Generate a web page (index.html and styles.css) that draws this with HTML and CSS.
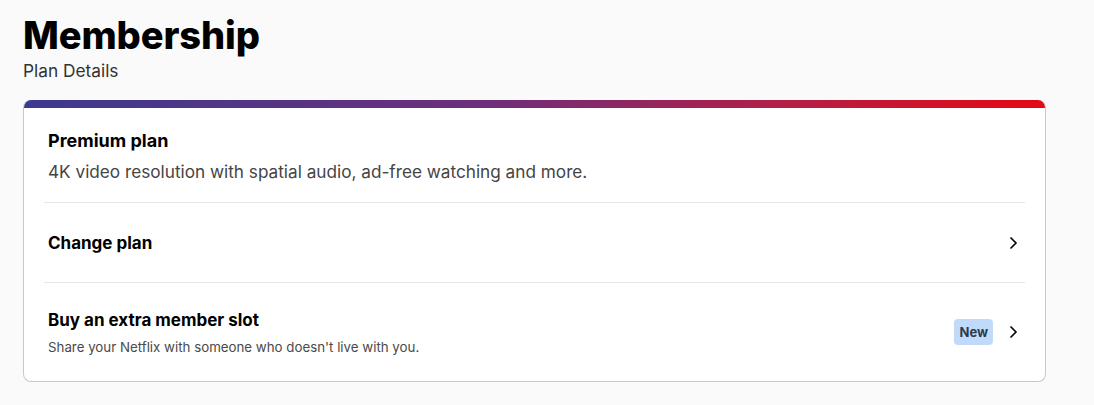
FILE: index.html
```html
<!doctype html>
<html lang="en">
<head>
    <meta charset="UTF-8">
    <title>Membership</title>
    <link rel="stylesheet" href="styles.css">
</head>
<body>
    <main class="page">
        <header class="page-head">
            <h1>Membership</h1>
            <p>Plan Details</p>
        </header>

        <section class="card">
            <div class="card-bar"></div>

            <div class="plan">
                <h2>Premium plan</h2>
                <p>4K video resolution with spatial audio, ad-free watching and more.</p>
            </div>

            <a class="row row-short" href="#">
                <div class="row-text">
                    <span class="row-title">Change plan</span>
                </div>
                <svg class="chevron" width="16" height="16" viewBox="0 0 16 16" fill="none">
                    <path d="M5.5 2.5 11 8l-5.5 5.5" stroke="#000" stroke-width="1.6"/>
                </svg>
            </a>

            <a class="row row-tall" href="#">
                <div class="row-text">
                    <span class="row-title">Buy an extra member slot</span>
                    <span class="row-sub">Share your Netflix with someone who doesn't live with you.</span>
                </div>
                <span class="badge">New</span>
                <svg class="chevron" width="16" height="16" viewBox="0 0 16 16" fill="none">
                    <path d="M5.5 2.5 11 8l-5.5 5.5" stroke="#000" stroke-width="1.6"/>
                </svg>
            </a>
        </section>
    </main>
</body>
</html>
```

FILE: styles.css
```css
body {
    margin: 0;
    background-color: #fafafa;
    font-family: 'Inter', 'Liberation Sans', sans-serif;
    color: #000;
}

.page {
    padding: 10px 48px 0 23px;
}

.page-head h1 {
    margin: 0;
    font-size: 38px;
    font-weight: 800;
    letter-spacing: -0.1px;
    line-height: 50px;
}

.page-head p {
    margin: 0;
    font-size: 17.3px;
    line-height: 22px;
    color: #333;
}

.card {
    margin-top: 18px;
    background-color: #fff;
    border: 1px solid #c8c8c8;
    border-top: none;
    border-radius: 8px;
    overflow: hidden;
}

.card-bar {
    height: 8px;
    background: linear-gradient(90deg, #3c3a8f 0%, #6d2f7c 45%, #b51e45 75%, #e50914 100%);
}

.plan {
    margin: 0 20px;
    padding: 20px 4px 19px;
    border-bottom: 1px solid #e6e6e6;
}

.plan h2 {
    margin: 0;
    font-size: 18px;
    font-weight: 700;
    line-height: 26px;
}

.plan p {
    margin: 7px 0 0;
    font-size: 17.2px;
    line-height: 22px;
    color: #454545;
}

.row {
    display: flex;
    align-items: center;
    gap: 12px;
    margin: 0 20px;
    padding: 0 4px;
    color: inherit;
    text-decoration: none;
}

.row-short {
    height: 79px;
    border-bottom: 1px solid #e6e6e6;
}

.row-tall {
    height: 98px;
}

.row-text {
    flex-grow: 1;
    display: flex;
    flex-direction: column;
}

.row-title {
    font-size: 17px;
    font-weight: 700;
    line-height: 22px;
}

.row-sub {
    margin-top: 7px;
    font-size: 13.3px;
    line-height: 18px;
    color: #4a4a4a;
}

.badge {
    padding: 3px 5px;
    border-radius: 4px;
    background-color: #c2dafa;
    color: #2c3a4d;
    font-size: 13px;
    font-weight: 700;
    line-height: 20px;
}

.chevron {
    flex-shrink: 0;
}
```
